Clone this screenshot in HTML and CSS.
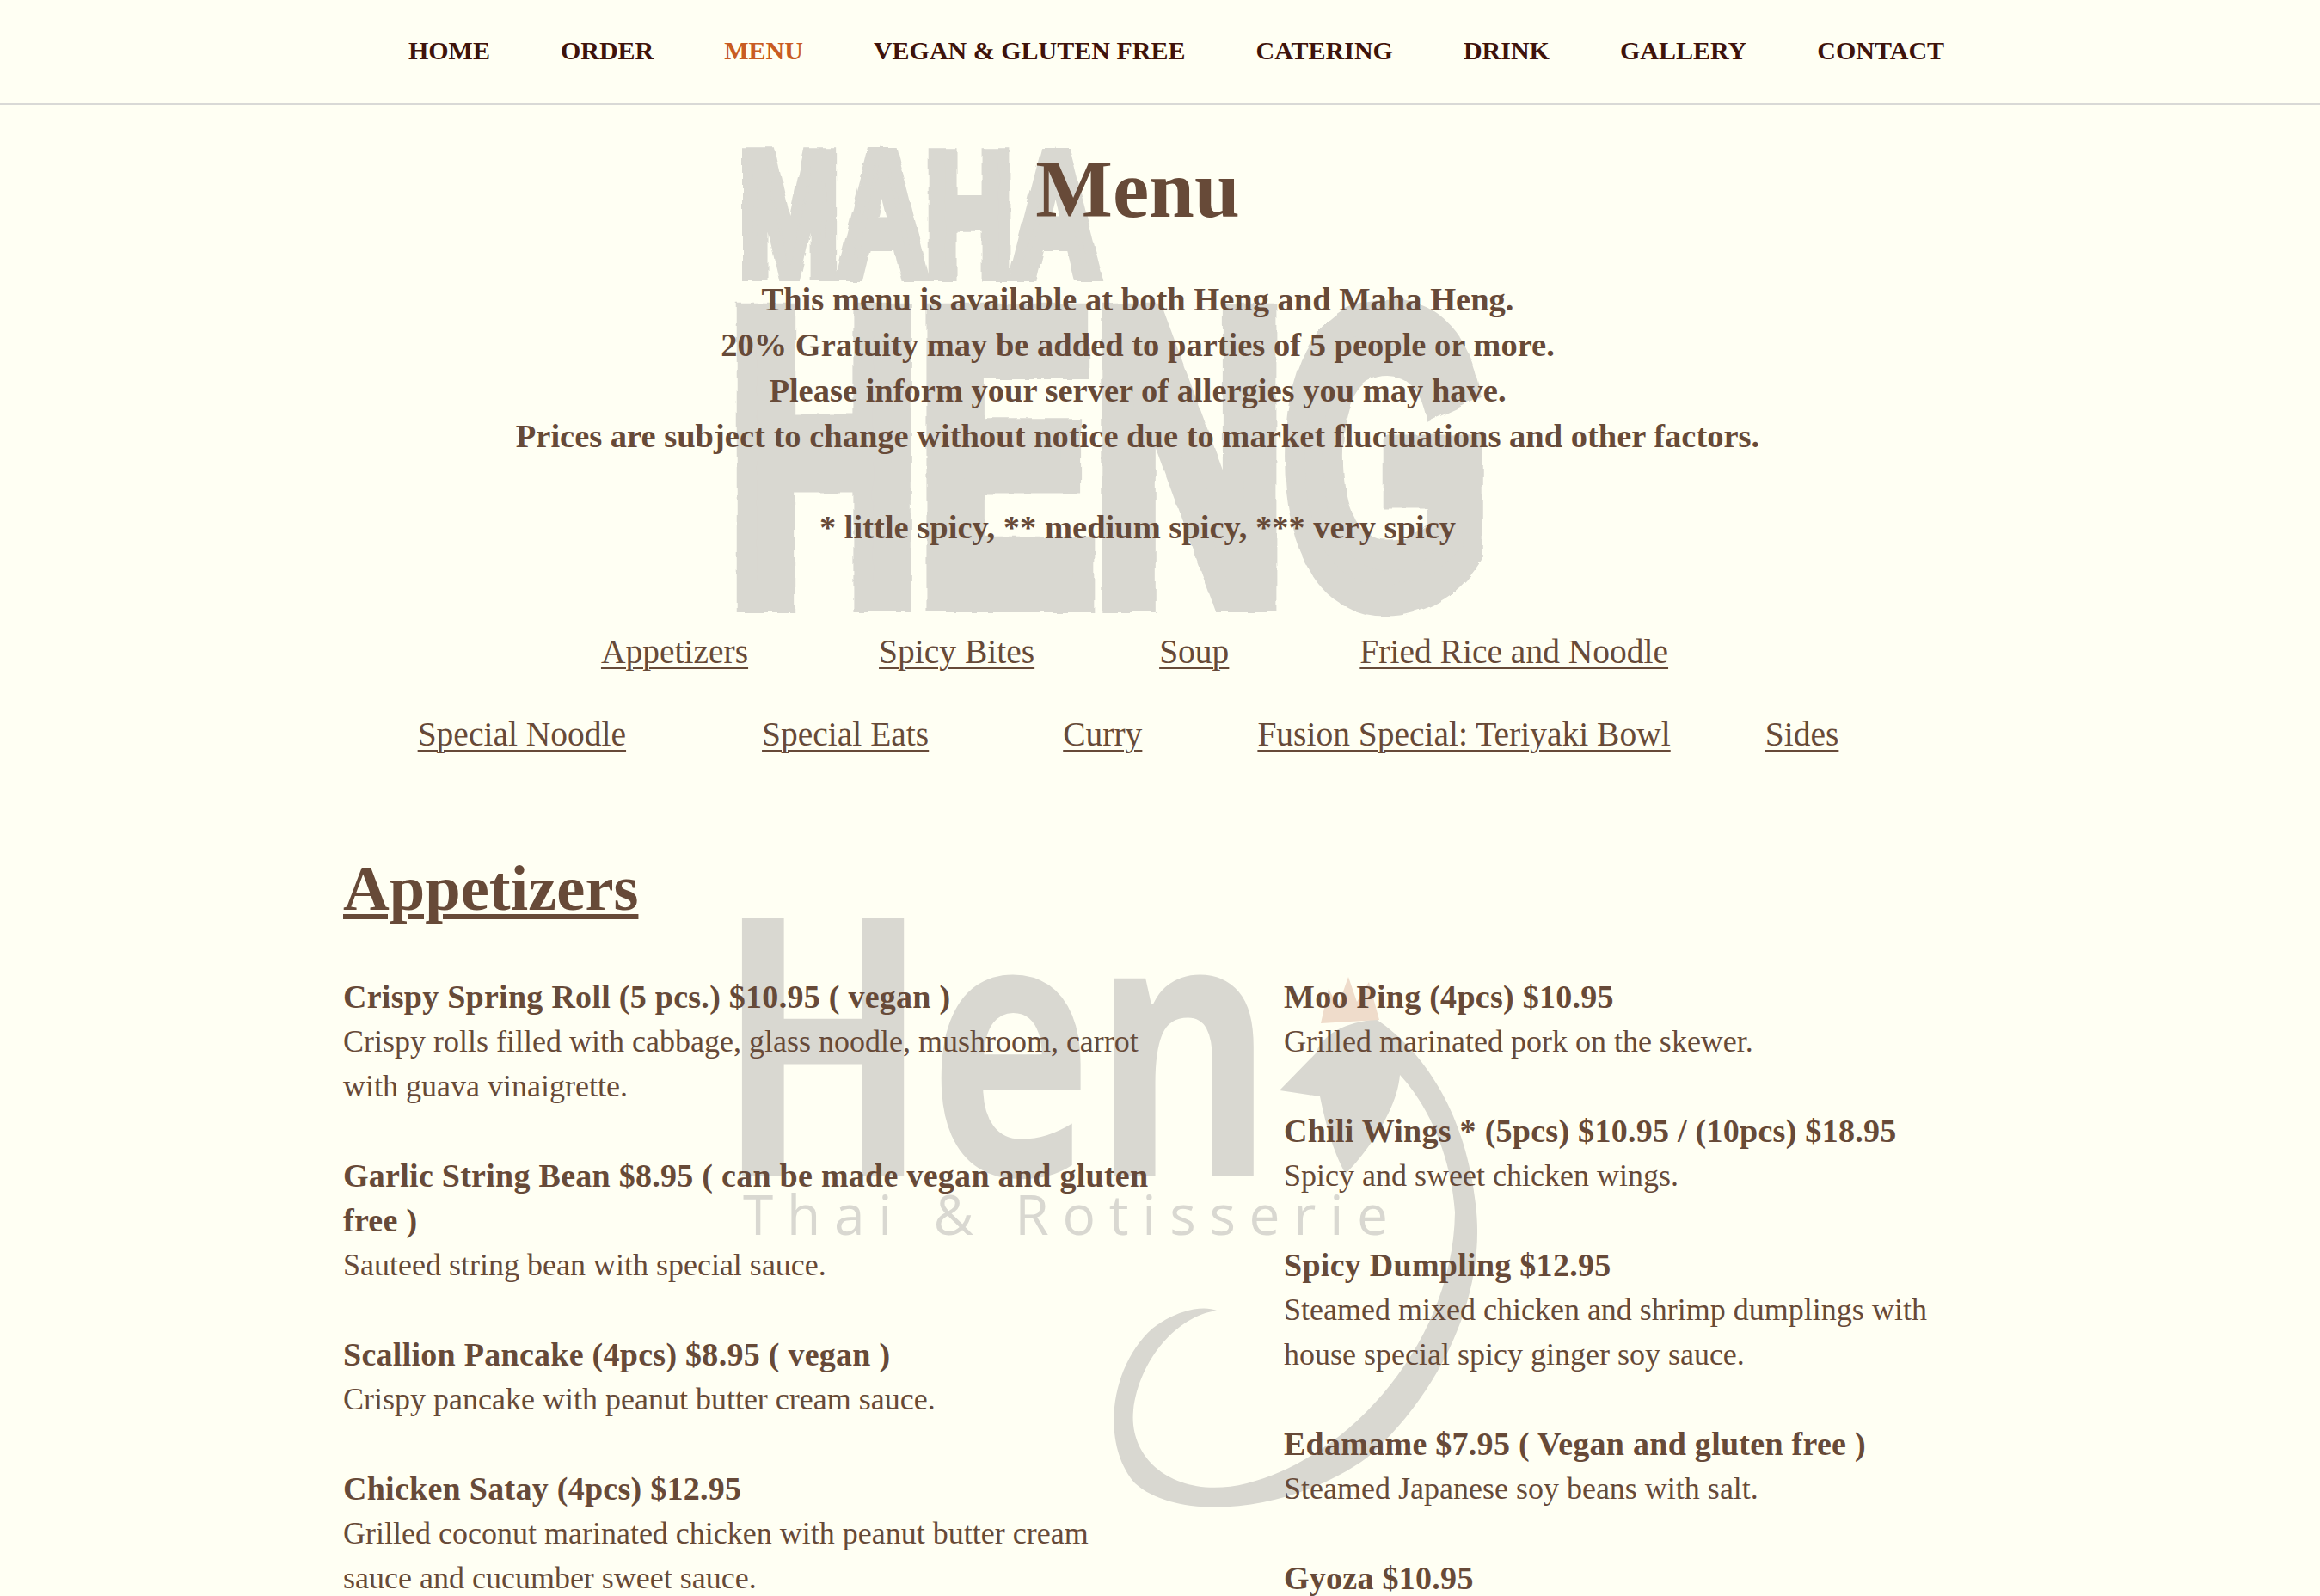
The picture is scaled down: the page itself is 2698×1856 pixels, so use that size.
FILE: index.html
```html
<!DOCTYPE html>
<html lang="en">
<head>
<meta charset="utf-8">
<title>Menu</title>
<link rel="stylesheet" href="styles.css">
</head>
<body>
<svg class="watermark" viewBox="0 0 2698 1856" aria-hidden="true">
  <defs>
    <filter id="rough" x="-5%" y="-5%" width="110%" height="110%">
      <feTurbulence type="fractalNoise" baseFrequency="0.05" numOctaves="2" seed="4"/>
      <feDisplacementMap in="SourceGraphic" scale="6"/>
    </filter>
  </defs>
  <g class="wm-fill" filter="url(#rough)">
    <text class="wm-block" x="860" y="318" font-size="198" textLength="418" lengthAdjust="spacingAndGlyphs" stroke-width="18">MAHA</text>
    <text class="wm-block" x="848" y="694" font-size="470" textLength="883" lengthAdjust="spacingAndGlyphs" stroke-width="36">HENG</text>
  </g>
  <g class="wm-fill">
    <text class="wm-hen" x="834" y="1367" font-size="420" textLength="648" lengthAdjust="spacingAndGlyphs">Hen</text>
    <text class="wm-sub" x="864" y="1436" font-size="64" textLength="750">Thai &amp; Rotisserie</text>
    <path d="M1488 1268 L1530 1225 C1540 1200 1565 1190 1600 1185 C1660 1225 1705 1300 1716 1400 C1730 1510 1670 1625 1590 1695 C1500 1760 1370 1770 1320 1725 C1280 1680 1290 1590 1340 1545 C1370 1522 1400 1518 1415 1524 C1370 1530 1325 1580 1318 1640 C1312 1700 1370 1745 1450 1725 C1570 1695 1690 1560 1692 1410 C1688 1350 1665 1290 1628 1250 C1625 1290 1590 1340 1565 1365 C1550 1340 1540 1300 1535 1275 Z"/>
  </g>
  <path class="wm-comb" d="M1536 1190 L1545 1150 L1556 1170 L1568 1136 L1578 1165 L1592 1142 L1604 1186 Z"/>
</svg>
<header class="site-header">
  <nav class="site-nav">
    <a href="#" class="nav-link">HOME</a>
    <a href="#" class="nav-link">ORDER</a>
    <a href="#" class="nav-link nav-active">MENU</a>
    <a href="#" class="nav-link">VEGAN &amp; GLUTEN FREE</a>
    <a href="#" class="nav-link">CATERING</a>
    <a href="#" class="nav-link">DRINK</a>
    <a href="#" class="nav-link">GALLERY</a>
    <a href="#" class="nav-link">CONTACT</a>
  </nav>
</header>
<main class="page">
  <section class="intro">
    <h1 class="page-title">Menu</h1>
    <p class="notice">This menu is available at both Heng and Maha Heng.<br>20% Gratuity may be added to parties of 5 people or more.<br>Please inform your server of allergies you may have.<br>Prices are subject to change without notice due to market fluctuations and other factors.<br><br>* little spicy, ** medium spicy, *** very spicy</p>
  </section>
  <div class="jump-row jump-row-one">
    <a href="#" class="jump">Appetizers</a>
    <a href="#" class="jump">Spicy Bites</a>
    <a href="#" class="jump jump-nudge">Soup</a>
    <a href="#" class="jump">Fried Rice and Noodle</a>
  </div>
  <div class="jump-row jump-row-two">
    <a href="#" class="jump">Special Noodle</a>
    <a href="#" class="jump jump-wide">Special Eats</a>
    <a href="#" class="jump jump-wider">Curry</a>
    <a href="#" class="jump jump-mid">Fusion Special: Teriyaki Bowl</a>
    <a href="#" class="jump">Sides</a>
  </div>
  <h2 class="section-title">Appetizers</h2>
  <div class="columns">
    <div class="col col-left">
      <article class="dish"><h3>Crispy Spring Roll (5 pcs.) $10.95 ( vegan )</h3><p>Crispy rolls filled with cabbage, glass noodle, mushroom, carrot with guava vinaigrette.</p></article>
      <article class="dish"><h3>Garlic String Bean $8.95 ( can be made vegan and gluten free )</h3><p>Sauteed string bean with special sauce.</p></article>
      <article class="dish"><h3>Scallion Pancake (4pcs) $8.95 ( vegan )</h3><p>Crispy pancake with peanut butter cream sauce.</p></article>
      <article class="dish"><h3>Chicken Satay (4pcs) $12.95</h3><p>Grilled coconut marinated chicken with peanut butter cream sauce and cucumber sweet sauce.</p></article>
    </div>
    <div class="col col-right">
      <article class="dish"><h3>Moo Ping (4pcs) $10.95</h3><p>Grilled marinated pork on the skewer.</p></article>
      <article class="dish"><h3>Chili Wings * (5pcs) $10.95 / (10pcs) $18.95</h3><p>Spicy and sweet chicken wings.</p></article>
      <article class="dish"><h3>Spicy Dumpling $12.95</h3><p>Steamed mixed chicken and shrimp dumplings with house special spicy ginger soy sauce.</p></article>
      <article class="dish"><h3>Edamame $7.95 ( Vegan and gluten free )</h3><p>Steamed Japanese soy beans with salt.</p></article>
      <article class="dish"><h3>Gyoza $10.95</h3></article>
    </div>
  </div>
</main>
</body>
</html>
```

FILE: styles.css
```css
* { box-sizing: border-box; }
html, body { height: 100%; overflow: hidden; }
body {
  margin: 0;
  background: #fffff3;
  color: #674a38;
  font-family: "Liberation Serif", serif;
  position: relative;
}
.watermark {
  position: absolute;
  left: 0;
  top: 0;
  width: 2698px;
  height: 1856px;
  z-index: 0;
}
.wm-fill { fill: #d9d8d1; stroke: none; }
.wm-block {
  font-family: "Liberation Sans", sans-serif;
  font-weight: 700;
  stroke: #d9d8d1;
}
.wm-hen { font-family: "Open Sans", sans-serif; font-weight: 700; }
.wm-sub { font-family: "Open Sans", sans-serif; font-weight: 400; }
.wm-comb { fill: #efdccb; }
.site-header {
  position: relative;
  z-index: 1;
  height: 122px;
  border-bottom: 2px solid #d9d9d6;
  display: flex;
  align-items: center;
  justify-content: center;
  padding-left: 38px;
}
.site-nav { display: flex; gap: 82px; padding-bottom: 2px; }
.nav-link {
  font-size: 30px;
  font-weight: 700;
  color: #3f130b;
  text-decoration: none;
  line-height: 34px;
}
.nav-active { color: #c95c22; }
.page { position: relative; z-index: 1; }
.intro { text-align: center; padding-right: 52px; }
.page-title {
  margin: 0;
  padding-top: 43px;
  font-size: 95px;
  line-height: 110px;
  font-weight: 700;
}
.notice {
  margin: 47px 0 0;
  font-size: 38.5px;
  line-height: 53px;
  font-weight: 700;
}
.jump-row { display: flex; justify-content: center; gap: 152px; }
.jump-row-one { margin-top: 94px; padding-right: 59px; }
.jump-row-two { margin-top: 48px; gap: 110px; padding-right: 74px; }
.jump {
  font-size: 39.5px;
  line-height: 48px;
  color: #674a38;
  text-decoration: underline;
  text-decoration-thickness: 2px;
  text-underline-offset: 5px;
}
.jump-nudge { margin-left: -7px; }
.jump-wide { margin-left: 48px; }
.jump-wider { margin-left: 46px; }
.jump-mid { margin-left: 24px; }
.section-title {
  margin: 111px 0 0 399px;
  font-size: 74.5px;
  line-height: 88px;
  font-weight: 700;
  text-decoration: underline;
  text-decoration-thickness: 6px;
  text-underline-offset: 5px;
}
.columns {
  display: flex;
  gap: 144px;
  margin: 56px 0 0 399px;
}
.col-left { width: 950px; }
.col-right { width: 800px; }
.dish { margin-bottom: 52px; font-size: 36px; line-height: 52px; }
.dish h3 { margin: 0; font-size: 38px; letter-spacing: 0.27px; font-weight: 700; line-height: 52px; }
.dish p { margin: 0; }
```
